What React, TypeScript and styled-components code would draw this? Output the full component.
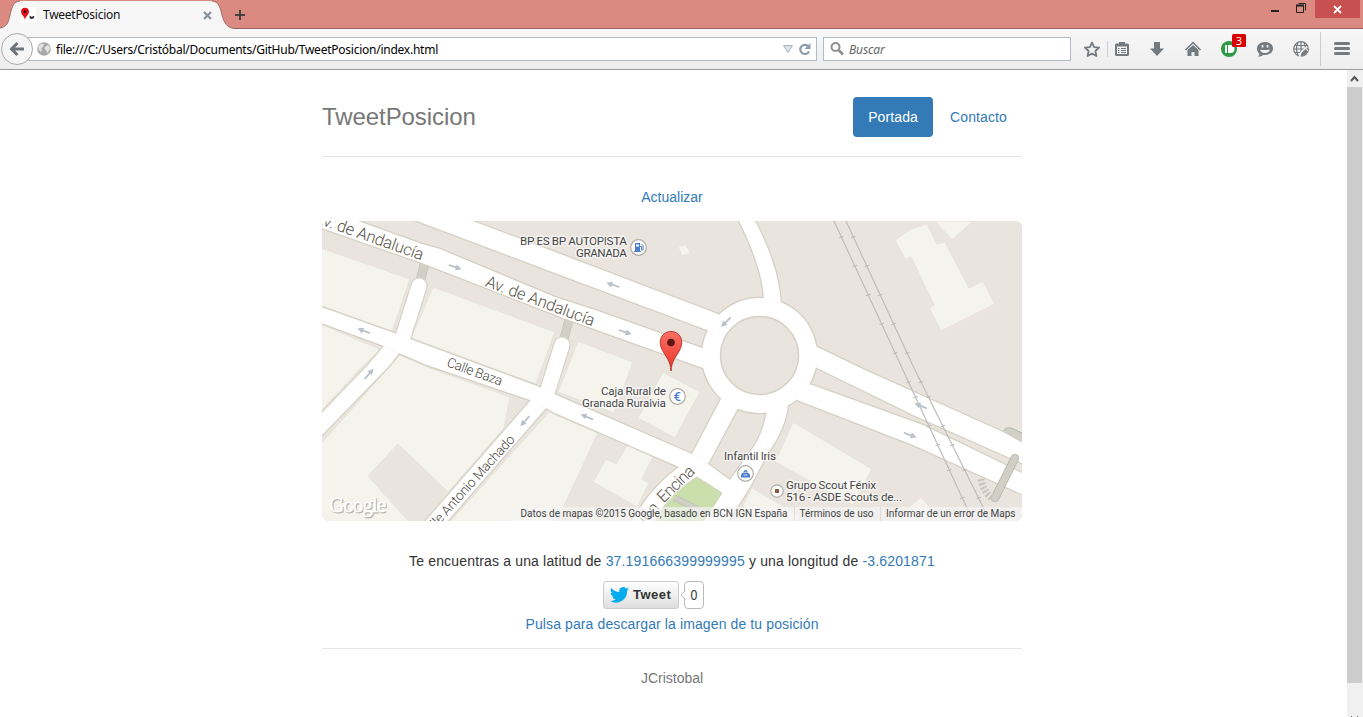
import React from "react";
import styled, { createGlobalStyle } from "styled-components";

const GlobalStyle = createGlobalStyle`
  html, body { margin: 0; padding: 0; height: 100%; overflow: hidden; background: #fff; }
  * { box-sizing: border-box; }
`;

const ui = `"Noto Sans", "Open Sans", sans-serif`;
const LINK = "#337ab7";

const Window = styled.div`
  width: 100%;
  height: 717px;
  display: flex;
  flex-direction: column;
  overflow: hidden;
  font-family: "Liberation Sans", Arial, sans-serif;
`;

/* ---------- title bar ---------- */
const TitleBar = styled.div`
  height: 29px;
  flex: none;
  display: flex;
  background: #da8a80;
  border-bottom: 1px solid #8f6068;
`;
const Tab = styled.div`
  position: relative;
  width: 233px;
  height: 29px;
  display: flex;
  align-items: center;
  padding: 1px 20px 0 20px;
`;
const TabShape = styled.svg`
  position: absolute;
  left: 0;
  top: 0;
`;
const Favicon = styled.svg`
  position: relative;
  flex: none;
  margin-right: 7px;
`;
const TabTitle = styled.span`
  position: relative;
  flex: 1;
  font: 12px/16px ${ui};
  letter-spacing: -0.27px;
  color: #111;
`;
const TabClose = styled.svg`
  position: relative;
  margin-right: 1px;
`;
const NewTab = styled.svg`
  margin: 9px 0 0 1px;
`;
const WindowButtons = styled.div`
  margin-left: auto;
  display: flex;
  align-items: flex-start;
`;
const MinMax = styled.svg`
  display: block;
`;
const CloseButton = styled.div`
  width: 45px;
  height: 18px;
  margin-right: 3px;
  background: #c75050;
  display: flex;
  justify-content: center;
  align-items: center;
`;

/* ---------- tool bar ---------- */
const ToolBar = styled.div`
  height: 41px;
  flex: none;
  display: flex;
  align-items: center;
  background: linear-gradient(#f7f7f8, #eeeeee);
  border-bottom: 1px solid #9b9b9b;
`;
const BackButton = styled.div`
  position: relative;
  z-index: 1;
  width: 32px;
  height: 32px;
  margin-left: 1px;
  flex: none;
  border: 1px solid #aaa;
  border-radius: 50%;
  background: #f5f5f5;
  display: flex;
  align-items: center;
  justify-content: center;
`;
const Field = styled.div<{ $w: number }>`
  width: ${(p) => p.$w}px;
  height: 24px;
  flex: none;
  display: flex;
  align-items: center;
  background: #fff;
  border: 1px solid #b0bac8;
`;
const UrlField = styled(Field)`
  margin-left: -10px;
  padding: 0 5px 0 13px;
`;
const SearchField = styled(Field)`
  margin-left: 6px;
  padding-left: 6px;
`;
const UrlText = styled.span`
  flex: 1;
  margin-left: 5px;
  padding-top: 2px;
  white-space: nowrap;
  font: 12px/16px ${ui};
  letter-spacing: -0.245px;
  color: #000;
`;
const SearchText = styled.span`
  margin-left: 5px;
  padding-top: 2px;
  font: italic 12px/16px ${ui};
  letter-spacing: -0.1px;
  color: #666;
`;
const Tools = styled.svg`
  display: block;
  flex: none;
`;

/* ---------- page ---------- */
const Viewport = styled.div`
  flex: 1;
  display: flex;
  min-height: 0;
`;
const Page = styled.div`
  flex: 1;
  display: flex;
  justify-content: center;
  padding-right: 3px;
`;
const ScrollBar = styled.div`
  width: 16px;
  display: flex;
  flex-direction: column;
  background: #f0f0f0;
`;
const Thumb = styled.div`
  width: 15px;
  height: 596px;
  background: #cdcdcd;
`;
const DownArrow = styled.svg`
  margin-top: auto;
`;
const Container = styled.main`
  width: 700px;
  font-size: 14px;
  line-height: 20px;
  color: #333;
`;
const Header = styled.header`
  height: 87px;
  padding-top: 27px;
  display: flex;
  justify-content: space-between;
  border-bottom: 1px solid #e5e5e5;
`;
const Brand = styled.h3`
  margin: 0;
  font-size: 24px;
  font-weight: 400;
  line-height: 40px;
  letter-spacing: -0.08px;
  color: #777;
`;
const Nav = styled.nav`
  display: flex;
  gap: 2px;
`;
const Pill = styled.a<{ $active?: boolean }>`
  height: 40px;
  padding: 10px 15px;
  border-radius: 4px;
  letter-spacing: 0.12px;
  color: ${(p) => (p.$active ? "#fff" : LINK)};
  background: ${(p) => (p.$active ? LINK : "transparent")};
`;
const Content = styled.section`
  display: flex;
  flex-direction: column;
  align-items: center;
  padding-top: 30px;
  height: 492px;
  border-bottom: 1px solid #e5e5e5;
`;
const Link = styled.a`
  color: ${LINK};
`;
const Coordinates = styled.div`
  letter-spacing: 0.165px;
  white-space: nowrap;
`;
const DownloadLink = styled(Link)`
  letter-spacing: 0.115px;
`;
const MapFrame = styled.div`
  position: relative;
  width: 700px;
  height: 300px;
  margin: 14px 0 30px;
  border-radius: 6px;
  overflow: hidden;
  flex: none;
`;
const MapSvg = styled.svg`
  display: block;
`;
const TweetRow = styled.div`
  display: flex;
  width: 138px;
  height: 28px;
  margin: 10px 0 5px;
`;
const TweetButton = styled.div`
  width: 76px;
  height: 28px;
  border: 1px solid #ccc;
  border-radius: 3px;
  background: linear-gradient(#fff, #dedede);
  display: flex;
  align-items: center;
  padding-left: 6px;
  gap: 4px;
  font-weight: 700;
  font-size: 13px;
  letter-spacing: 0.5px;
  color: #333;
`;
const Bubble = styled.div`
  position: relative;
  width: 20px;
  height: 28px;
  margin-left: 5px;
  border: 1px solid #bbb;
  border-radius: 4px;
  background: #fff;
  text-align: center;
  line-height: 26px;
  color: #333;
`;
const BubbleCount = styled.span`
  display: inline-block;
  font-size: 14px;
  transform: scaleX(0.88);
`;
const BubbleTip = styled.svg`
  position: absolute;
  left: -5px;
  top: 8px;
`;
const Footer = styled.footer`
  padding-top: 19px;
  text-align: center;
  color: #777;
`;

/* ---------- map data ---------- */
const blocks = [
  "318,247 410,279 392,332 318,305",
  "433,287 555,332 536,384 411,338",
  "318,323 377,348 379,351 359,370 318,414",
  "400,355 427,367 510,397 504,428 448,492 398,444 368,476 411,524 318,524 318,447",
  "549,412 598,433 562,510 555,524 448,524",
  "578,341 633,362 614,413 558,392",
  "663,372 700,392 675,438 638,418",
  "628,444 653,457 642,479 649,483 637,507 593,482 606,459 616,464",
  "793,422 872,469 853,505 775,462",
  "921,497 942,521 893,521",
  "752,488 800,516 797,521 735,521",
  "895,240 911,229 927,224 937,244 945,242 969,288 983,281 995,304 941,331 929,308 934,305 911,257 905,259",
  "935,221 952,240 973,221",
  "678,247 686,244 690,253 682,256",
];

const roads = [
  "M310 205L358 221L422 244L440 249L555 297L598 311L702 348L720 355L712 371L703 368L562 317.500L422 263L310 224Z",
  "M417 221L555 273L707 330L728 330L718 314L555 252L470 220L440 205Z",
  "M738 219Q763 268 764 300L764 306L781 306Q780 268 754 219Z",
  "M815 346L865 370L1003 432L1026 445V465L913 415L897 407L817 368L805 360Z",
  "M811 384.500L923 425L1026 475V496L913 445L797 400L790 385Z",
  "M722 397L692 454L708 464L738 408L736 395Z",
  "M767 411Q763 432 755 445L730 480L704 521V525H726L750 487L768 453Q786 428 788 404Z",
  "M316 305L394 333L410 339L537 386L562 397.500L692 454L708 464L730 480L735 490L722 493L697 477L679 467L555 413L546 408L530 400L427 365L399 353L384 346L316 321Z",
  "M318 417L368 365L384 346L399 353L390 365L318 439Z",
  "M531 400L423 524H445L546 408Z",
  "M679 467Q650 488 630 524H657Q672 493 697 477L700 465Z",
];

const arrows: [number, number, number][] = [
  [455, 267, 18], [613, 285, 198], [625, 332, 18], [364, 331, 200], [369, 374, -48],
  [525, 421, 132], [587, 417, 203], [726, 322, 135], [910, 435, 20], [921, 406, 203],
];

const railTicks = [237, 266, 295, 324, 353, 382, 397, 426, 445, 470, 498];
const halo = { stroke: "#fff", strokeWidth: 3, strokeOpacity: 0.55, paintOrder: "stroke" as const, strokeLinejoin: "round" as const };

const MapPicture = () => (
  <MapSvg width="700" height="300" viewBox="322 221 700 300" fontFamily="Roboto, sans-serif">
    <rect x="322" y="221" width="700" height="300" fill="#e9e5de" />
    <g fill="#f4f3ec" stroke="#e6e3db" strokeWidth="1">
      {blocks.map((b) => <polygon key={b} points={b} />)}
    </g>
    <g stroke="#d1d0c6" fill="none">
      <path d="M425 262L420 282" stroke="#c4c2b5" strokeWidth="9.500" />
      <path d="M425 262L420 282" strokeWidth="8" />
      <path d="M569 320L564 339" stroke="#c4c2b5" strokeWidth="9" />
      <path d="M569 320L564 339" strokeWidth="7.500" />
      <path d="M1003 432Q1005 427 1011 428L1024 434V448Z" fill="#d1d0c6" stroke="#b7b6aa" />
    </g>
    <g stroke="#d5d0c3" strokeWidth="2.500" fill="#d5d0c3">
      {roads.map((d) => <path key={d} d={d} />)}
      <circle cx="759.500" cy="355.500" r="57.500" />
      <path d="M419 286L402 340M562 345L546 396" strokeWidth="17.200" strokeLinecap="round" />
    </g>
    <g fill="#fff">
      {roads.map((d) => <path key={d} d={d} />)}
      <circle cx="759.500" cy="355.500" r="57.500" />
      <path d="M419 286L402 340M562 345L546 396" stroke="#fff" strokeWidth="15" strokeLinecap="round" />
    </g>
    <circle cx="759.500" cy="355.500" r="39" fill="#e9e5de" stroke="#d5d0c3" strokeWidth="1.500" />
    <path d="M697 477L722 493L704 521H655Q668 494 697 477Z" fill="#cbdfac" stroke="#d5d0c3" />
    <path d="M675 498L706 514" stroke="#d1d0c6" strokeWidth="6" />
    <path d="M675 495L707 511M673 500L700 514" stroke="#bdbdb2" strokeWidth="0.800" />

    <path d="M1015 458L995 498" stroke="#b7b6aa" strokeWidth="8.500" strokeLinecap="round" />
    <path d="M1015 458L995 498" stroke="#d1d0c6" strokeWidth="7" strokeLinecap="round" />
    <path d="M981 479Q983 491 992 498" fill="none" stroke="#c8c5ba" strokeWidth="7" strokeDasharray="2 2" />

    <g stroke="#bdbdbd" strokeWidth="1.200" fill="none">
      <path d="M834 221L902 368L973 521M846 221L914 368L990 521" />
      {railTicks.map((y) => {
        const x1 = 834 + (y - 221) * 0.4633;
        const x2 = y > 368 ? 914 + (y - 368) * 0.497 : 846 + (y - 221) * 0.4633;
        return <path key={y} d={`M${x1 - 2.2} ${y + 0.7}l4.400 -1.400M${x2 - 2.2} ${y + 0.7}l4.400 -1.400`} />;
      })}
    </g>

    {arrows.map(([x, y, a]) => (
      <path key={`${x}-${y}`} transform={`translate(${x} ${y}) rotate(${a})`} d="M-6.500 -0.900H1V-3L7 0L1 3V0.900H-6.500Z" fill="#b9c0c8" />
    ))}

    <g fill="#575348">
      <g fontSize="16.500" fontWeight="300" {...halo}>
        <text transform="translate(313 222) rotate(19.500)" textLength="115">Av. de Andalucía</text>
        <text transform="translate(484.500 286) rotate(20.500)" textLength="115">Av. de Andalucía</text>
        <text transform="translate(663.500 503.500) rotate(-44)" fontSize="16.500" textLength="45">Encina</text>
        <text transform="translate(660 508) rotate(-50)" fontSize="16.500" textAnchor="end">ión</text>
      </g>
      <g fontSize="13.500" fontWeight="300" fill="#47443b" {...halo}>
        <text transform="translate(446 366) rotate(20)" textLength="58">Calle Baza</text>
        <text transform="translate(515.500 440) rotate(-48)" textAnchor="end" textLength="134">Calle Antonio Machado</text>
      </g>
    </g>

    <g fill="#444" fontSize="11.800" {...halo}>
      <text x="627" y="245" textAnchor="end" textLength="107">BP ES BP AUTOPISTA</text>
      <text x="627" y="257" textAnchor="end" textLength="51">GRANADA</text>
      <text x="666" y="395" textAnchor="end" textLength="65">Caja Rural de</text>
      <text x="666" y="407" textAnchor="end" textLength="84">Granada Ruralvia</text>
      <text x="724" y="460" textLength="52">Infantil Iris</text>
      <text x="786" y="489" textLength="90">Grupo Scout Fénix</text>
      <text x="786" y="501" textLength="116">516 - ASDE Scouts de...</text>
    </g>

    <g fill="#fff" stroke="#b0aea7" strokeWidth="1.200">
      <circle cx="638.500" cy="247.500" r="7.800" />
      <circle cx="677.500" cy="396.500" r="7.800" />
      <circle cx="745.500" cy="473.500" r="7.800" />
      <circle cx="777" cy="491" r="6.200" />
    </g>
    <g fill="#4a7fcf">
      <path d="M635 243h5v8h1v1h-7v-1h1zM636 244.500v2h3v-2z" fillRule="evenodd" />
      <path d="M640 246.500h1.500v3.500h1.500v-4.500l-1.500-1.500" fill="none" stroke="#4a7fcf" />
      <text x="677.300" y="401" fontSize="13" fontWeight="500" textAnchor="middle">€</text>
      <path d="M741 477.500v-3l1.500-1.500h1a2 3 0 0 1 4 0h1l1.500 1.500v3zM744.500 473h2a1 1.600 0 0 0-2 0z" fillRule="evenodd" />
      <path d="M743.500 475h4" stroke="#fff" strokeWidth="0.800" />
      <rect x="775" y="489" width="4" height="4" fill="#8b5a42" />
    </g>

    <defs>
      <linearGradient id="pin" x1="0" y1="0" x2="0" y2="1">
        <stop offset="0" stopColor="#fb7064" />
        <stop offset="1" stopColor="#e8352b" />
      </linearGradient>
      <linearGradient id="strip" x1="0" y1="0" x2="1" y2="0">
        <stop offset="0" stopColor="#f5f5f5" stopOpacity="0" />
        <stop offset="0.100" stopColor="#f5f5f5" stopOpacity="0.700" />
        <stop offset="1" stopColor="#f5f5f5" stopOpacity="0.700" />
      </linearGradient>
    </defs>
    <path d="M671 371C670.500 361 666 357 662.500 350.500C657 340 662.500 331.500 671 331.500S685 340 679.500 350.500C676 357 671.500 361 671 371Z" fill="url(#pin)" stroke="#b93530" />
    <circle cx="671" cy="342.500" r="3.800" fill="#5c1512" />

    <g fontFamily="'Liberation Serif', serif" fontSize="21">
      <text x="330" y="513" textLength="57" fill="#aaa8a0" stroke="#b8b6ae" strokeWidth="0.800">Google</text>
      <text x="329" y="512" textLength="57" fill="#fff" stroke="#fff" strokeWidth="0.500">Google</text>
    </g>
    <rect x="484" y="507" width="538" height="14" fill="url(#strip)" />
    <path d="M794.500 507v14M880.500 507v14" stroke="#dedcd7" />
    <g fill="#444" fontSize="10">
      <text x="520.500" y="517" textLength="267">Datos de mapas ©2015 Google, basado en BCN IGN España</text>
      <text x="799.500" y="517" textLength="74">Términos de uso</text>
      <text x="886" y="517" textLength="129.500">Informar de un error de Maps</text>
    </g>
  </MapSvg>
);

/* Icons at the right end of the tool bar, x 1071..1363 */
const ToolIcons = () => (
  <Tools width="292" height="40" viewBox="1071 29 292 40">
    <path d="M1092 42.500l2.100 4.600 5 .5-3.700 3.400 1 5-4.400-2.600-4.400 2.600 1-5-3.700-3.400 5-.5z" fill="none" stroke="#737a80" strokeWidth="1.800" strokeLinejoin="round" />
    <path d="M1107.500 41v16" stroke="#c9cdd2" />
    <g fill="#737a80">
      <path fillRule="evenodd" d="M1116.500 43.500h2.500v-1.500h6v1.500h2.500q1.500 0 1.500 1.500v9.500q0 1.500-1.500 1.500h-11q-1.500 0-1.500-1.500v-9.500q0-1.500 1.500-1.500zM1117 46.500v7.500h10v-7.500z" />
      <path d="M1118 48.500h1.500M1121 48.500h5M1118 50.500h1.500M1121 50.500h5M1118 52.500h1.500M1121 52.500h5" stroke="#737a80" strokeWidth="1" />
      <path d="M1154 42h6v6.500h4l-7 7.500-7-7.500h4z" />
      <path d="M1187.500 50l5.500-5 5.500 5v6h-4v-4h-3v4h-4z" />
      <path d="M1185.500 50l7.500-7.500 7.500 7.500" fill="none" stroke="#737a80" strokeWidth="1.500" />
      <path d="M1265 42c5 0 8 3 8 6.500s-3 6.500-8 6.500l-2 0q-2 2-5 1.500q1.500-1 1.500-2.800c-1.600-1.200-2.500-3-2.500-5.200 0-3.500 3-6.500 8-6.500z" />
      <rect x="1334" y="42" width="16" height="3" rx="1.500" />
      <rect x="1334" y="47" width="16" height="3" rx="1.500" />
      <rect x="1334" y="52" width="16" height="3" rx="1.500" />
    </g>
    <path d="M1260 49.500q5 1.200 10 0-1 3.500-5 3.500t-5-3.500z" fill="#f3f3f3" />
    <path d="M1262.500 45v2.500M1267.500 45v2.500" stroke="#f3f3f3" strokeWidth="1.800" />
    <circle cx="1229" cy="49" r="8" fill="#2b9a40" />
    <path d="M1225 45h2v8h-2zM1228 45h2.500a4 4 0 0 1 0 8h-2.500z" fill="#fff" />
    <rect x="1232" y="34" width="14" height="13" rx="1.500" fill="#d90000" />
    <text x="1239" y="44.500" fontFamily="Noto Sans, sans-serif" fontSize="10.500" textAnchor="middle" fill="#fff">3</text>
    <g fill="none" stroke="#737a80" strokeWidth="1.200">
      <circle cx="1301" cy="49" r="7.300" />
      <path d="M1301 42v14M1294 49h14M1295 45.500h12M1295 52.500h12M1298 42.500q-3 6.500 0 13M1304 42.500q3 6.500 0 13" />
    </g>
    <path d="M1298.500 57.500l1.500-5 6.500-6.500 3 3-6.500 7z" fill="#f2f2f2" />
    <path d="M1300.500 56.500l1-3.500 4-4 2.500 2.500-4 4zM1306.300 48.200l1-1 2.200 2.200-1 1z" fill="#737a80" />
    <path d="M1320.500 32v34" stroke="#c5ccd6" />
  </Tools>
);

export default function App() {
  return (
    <Window>
      <GlobalStyle />
      <TitleBar>
        <Tab>
          <TabShape width="234" height="29" viewBox="0 0 234 29">
            <path d="M0 28C7 27 8.500 22 10 15C12 6 14 1.500 20 1H212C218 1.500 220 6 222 15C224 22 226 27 233.500 28.500V29H0Z" fill="#f6f6f7" />
            <path d="M0 28C7 27 8.500 22 10 15C12 6 14 1.500 20 1M212 1C218 1.500 220 6 222 15C224 22 226 27 233.500 28.500" fill="none" stroke="#a16a6c" />
          </TabShape>
          <Favicon width="16" height="16" viewBox="0 0 16 16">
            <rect width="16" height="16" fill="#fff" />
            <path d="M5 13C4.500 9 1 8 1 4.800a4 4 0 0 1 8 0C9 8 5.500 9 5 13z" fill="#e3131b" />
            <circle cx="5" cy="4.500" r="1.500" fill="#4a0508" />
            <path d="M9.500 8.500l2.500 1.500q1-1.500 2.500-.5-.5 3-4 2.500-1.200-1.500-1-3.500z" fill="#333" />
          </Favicon>
          <TabTitle>TweetPosicion</TabTitle>
          <TabClose width="9" height="9" viewBox="0 0 9 9">
            <path d="M1 1l7 7M8 1l-7 7" stroke="#88929c" strokeWidth="2.200" />
          </TabClose>
        </Tab>
        <NewTab width="12" height="12" viewBox="0 0 12 12">
          <path d="M6 1v10M1 6h10" stroke="#4a3f40" strokeWidth="2" />
        </NewTab>
        <WindowButtons>
          <MinMax width="45" height="18" viewBox="1270 0 45 18">
            <path d="M1271 11h8" stroke="#222" strokeWidth="2" />
            <path d="M1296.500 5.500h7v7h-7zM1298.500 3.500h7v7" fill="none" stroke="#222" />
            <path d="M1296 5.500h8" stroke="#222" strokeWidth="2" />
          </MinMax>
          <CloseButton>
            <svg width="9" height="9" viewBox="0 0 9 9">
              <path d="M1 1l7 7M8 1l-7 7" stroke="#fff" strokeWidth="1.800" />
            </svg>
          </CloseButton>
        </WindowButtons>
      </TitleBar>
      <ToolBar>
        <BackButton>
          <svg width="16" height="16" viewBox="0 0 16 16">
            <path d="M8.500 2L2.500 8l6 6M3 8h12" fill="none" stroke="#6c737a" strokeWidth="3" />
          </svg>
        </BackButton>
        <UrlField $w={794}>
          <svg width="14" height="14" viewBox="0 0 14 14">
            <circle cx="7" cy="7" r="6.800" fill="#a9a9a9" />
            <path d="M1.500 4l3-2.500 2.500 1-1 2.500-2 1 1 2.500-1.500 1.500-2-3zM8 5l3-2 2 3-1 3-2 2-1-3-1.500-1z" fill="#e2e2e2" />
          </svg>
          <UrlText>file:///C:/Users/Cristóbal/Documents/GitHub/TweetPosicion/index.html</UrlText>
          <svg width="28" height="14" viewBox="0 0 28 14">
            <path d="M0.500 3.500h9l-4.500 7z" fill="#dce3ea" stroke="#a9b4be" />
            <path d="M25.500 4.500A4.600 4.600 0 1 0 26 9.500" fill="none" stroke="#8e9bab" strokeWidth="2.200" />
            <path d="M27.500 1v6h-6z" fill="#8e9bab" />
          </svg>
        </UrlField>
        <SearchField $w={248}>
          <svg width="14" height="14" viewBox="0 0 14 14">
            <circle cx="5.500" cy="5" r="4" fill="none" stroke="#8f8f8f" strokeWidth="2" />
            <path d="M8.500 8l4.500 4.500" stroke="#8f8f8f" strokeWidth="2.600" />
          </svg>
          <SearchText>Buscar</SearchText>
        </SearchField>
        <ToolIcons />
      </ToolBar>
      <Viewport>
        <Page>
          <Container>
            <Header>
              <Brand>TweetPosicion</Brand>
              <Nav>
                <Pill $active>Portada</Pill>
                <Pill>Contacto</Pill>
              </Nav>
            </Header>
            <Content>
              <Link>Actualizar</Link>
              <MapFrame>
                <MapPicture />
              </MapFrame>
              <Coordinates>
                Te encuentras a una latitud de <Link>37.191666399999995</Link> y una longitud de <Link>-3.6201871</Link>
              </Coordinates>
              <TweetRow>
                <TweetButton>
                  <svg width="19" height="16" viewBox="0 0 24 20">
                    <path d="M24 2.400a10 10 0 0 1-2.800.8A5 5 0 0 0 23.300.5a10 10 0 0 1-3.100 1.200 4.900 4.900 0 0 0-8.400 4.500A14 14 0 0 1 1.700 1a4.900 4.900 0 0 0 1.500 6.600 5 5 0 0 1-2.200-.6 4.900 4.900 0 0 0 3.900 4.900 5 5 0 0 1-2.200.1 4.900 4.900 0 0 0 4.600 3.400A9.900 9.900 0 0 1 0 17.400 14 14 0 0 0 21.500 5 10 10 0 0 0 24 2.400z" fill="#00aced" />
                  </svg>
                  Tweet
                </TweetButton>
                <Bubble>
                  <BubbleTip width="6" height="10" viewBox="0 0 6 10">
                    <path d="M5.500 0.500L1 5l4.500 4.500" fill="#fff" stroke="#bbb" />
                  </BubbleTip>
                  <BubbleCount>0</BubbleCount>
                </Bubble>
              </TweetRow>
              <DownloadLink>Pulsa para descargar la imagen de tu posición</DownloadLink>
            </Content>
            <Footer>JCristobal</Footer>
          </Container>
        </Page>
        <ScrollBar>
          <svg width="16" height="17" viewBox="0 0 16 17">
            <path d="M4 11l3.500-4 3.500 4" fill="none" stroke="#555" strokeWidth="2" />
          </svg>
          <Thumb />
          <DownArrow width="16" height="2" viewBox="0 0 16 2">
            <path d="M4 1.500h1M10 1.500h1" stroke="#555" strokeWidth="1" />
          </DownArrow>
        </ScrollBar>
      </Viewport>
    </Window>
  );
}
